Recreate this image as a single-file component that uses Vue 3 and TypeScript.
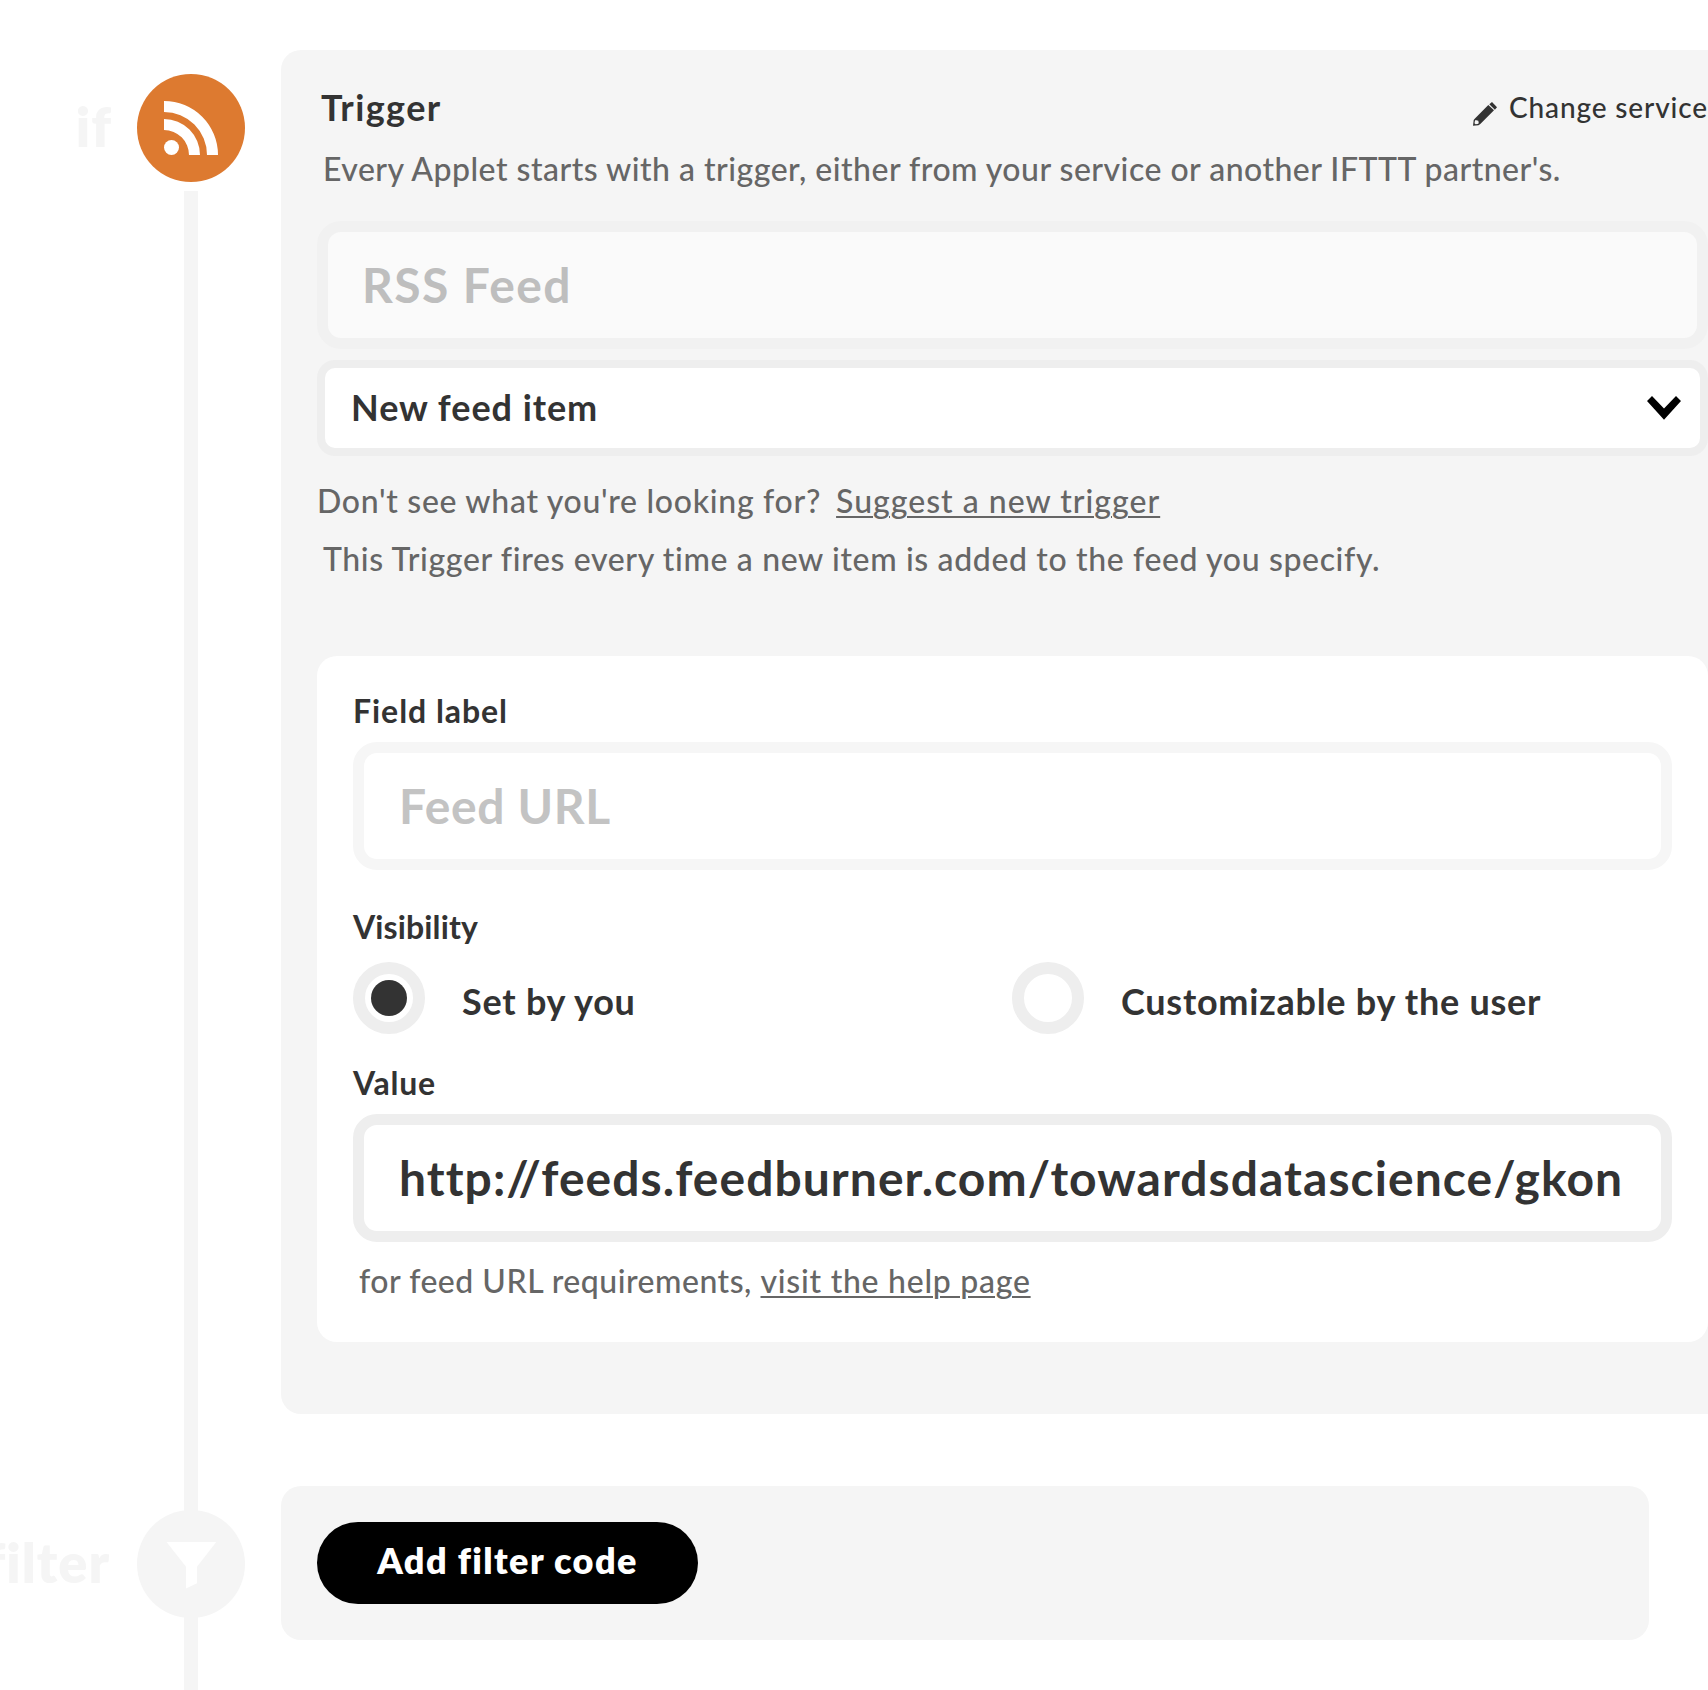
<script setup lang="ts">
import { ref } from 'vue'

type Visibility = 'fixed' | 'custom'

const visibility = ref<Visibility>('fixed')
const options: { id: Visibility; label: string }[] = [
  { id: 'fixed', label: 'Set by you' },
  { id: 'custom', label: 'Customizable by the user' },
]
</script>

<template>
  <main class="composer">
    <div class="connector"></div>

    <section class="step">
      <div class="rail">
        <span class="rail-label rail-if">if</span>
        <svg class="badge" viewBox="0 0 108 108">
          <circle cx="54" cy="54" r="54" fill="#dd7a30" />
          <g fill="#fff">
            <circle cx="34.5" cy="73.5" r="7.5" />
            <path d="M27 27a54 54 0 0 1 54 54H70A43 43 0 0 0 27 38Z" />
            <path d="M27 45a36 36 0 0 1 36 36H52A25 25 0 0 0 27 56Z" />
          </g>
        </svg>
      </div>

      <div class="panel trigger">
        <header class="head">
          <h2 class="title">Trigger</h2>
          <a class="change">
            <svg class="pencil" viewBox="0 0 24 24">
              <path fill="#333" d="M19 0 24 5.3 21.9 7.7 16.3 2.3Z" />
              <path
                fill="#333"
                fill-rule="evenodd"
                d="M15.3 3 21 8.3 7.3 22 5.5 23.3 0 23.8 0.7 18 1.7 16.7ZM2.5 18 1.9 19 1.5 21.3 2.5 22.3 4.6 22 5.8 21.2 5.3 18.8Z"
              />
            </svg>
            <span class="change-text">Change service</span>
          </a>
        </header>
        <p class="note intro">Every Applet starts with a trigger, either from your service or another IFTTT partner's.</p>

        <div class="field service"><span class="rss">RSS Feed</span></div>

        <div class="select">
          <span class="select-text">New feed item</span>
          <svg class="chevron" viewBox="0 0 34 24">
            <path d="M0 5 5 0 17 12.6 29 0 34 5 17 23.7Z" />
          </svg>
        </div>

        <p class="note suggest">
          <span class="ask">Don't see what you're looking for?</span>
          <a class="link suggest-link">Suggest a new trigger</a>
        </p>
        <p class="note fires">This Trigger fires every time a new item is added to the feed you specify.</p>

        <div class="card">
          <h3 class="label field-label">Field label</h3>
          <div class="field disabled"><span class="feed-url">Feed URL</span></div>

          <h3 class="label visibility">Visibility</h3>
          <div class="options">
            <div v-for="o in options" :key="o.id" class="option" @click="visibility = o.id">
              <span class="radio"><span v-if="visibility === o.id" class="dot"></span></span>
              <span class="option-text">{{ o.label }}</span>
            </div>
          </div>

          <h3 class="label value">Value</h3>
          <div class="field active"><span class="url">http://feeds.feedburner.com/towardsdatascience/gkon</span></div>

          <p class="note help">
            <span class="help-text">for feed URL requirements,&nbsp;</span><a class="link help-link">visit the help page</a>
          </p>
        </div>
      </div>
    </section>

    <section class="step">
      <div class="rail">
        <span class="rail-label">filter</span>
        <svg class="badge" viewBox="0 0 108 108">
          <circle cx="54" cy="54" r="54" fill="#f5f5f5" />
          <path fill="#fff" d="M29.5 32H79.3L60 56.7V73.3L49 78.4V56.7Z" />
        </svg>
      </div>
      <div class="panel filter">
        <button class="add" type="button">Add filter code</button>
      </div>
    </section>
  </main>
</template>

<style>
body {
  margin: 0;
  background: #fff;
}
</style>

<style scoped>
.composer {
  position: relative;
  box-sizing: border-box;
  width: 1708px;
  height: 1690px;
  padding-top: 50px;
  display: flex;
  flex-direction: column;
  gap: 72px;
  overflow: hidden;
  font-family: Lato, "Liberation Sans", sans-serif;
  color: #333;
  white-space: nowrap;
}
h2, h3, p {
  margin: 0;
}
.connector {
  position: absolute;
  left: 184px;
  top: 191px;
  bottom: 0;
  width: 14px;
  background: #f5f5f5;
}
.step {
  position: relative;
  display: flex;
  align-items: flex-start;
}
.rail {
  flex: none;
  width: 281px;
  padding-top: 24px;
  display: flex;
  justify-content: flex-end;
}
.rail-label {
  width: 110px;
  margin: -1px 27px 0 0;
  display: flex;
  justify-content: flex-end;
  font-size: 54px;
  font-weight: 800;
  line-height: 108px;
  letter-spacing: 1px;
  color: #f5f5f5;
}
.rail-if {
  width: 112px;
  margin-right: 25px;
}
.badge {
  flex: none;
  display: block;
  width: 108px;
  height: 108px;
  margin-right: 36px;
}
.panel {
  flex: none;
  box-sizing: border-box;
  border-radius: 20px;
  background: #f5f5f5;
}
.trigger {
  width: 1463px;
  padding: 35px 36px 72px;
}
.head {
  display: flex;
  justify-content: space-between;
  align-items: flex-start;
  height: 44px;
}
.title {
  margin-left: 4px;
  font-size: 36px;
  font-weight: 700;
  line-height: 44px;
  letter-spacing: 1.4px;
}
.change {
  display: flex;
  align-items: flex-start;
  gap: 12px;
}
.pencil {
  width: 24px;
  height: 24px;
  margin-top: 17px;
}
.change-text {
  margin-top: 4px;
  font-size: 28px;
  font-weight: 500;
  line-height: 36px;
  letter-spacing: 0.87px;
}
.note {
  font-size: 32px;
  font-weight: 500;
  line-height: 40px;
  color: #666;
}
.intro {
  margin: 20px 0 32px 6px;
  letter-spacing: 0.48px;
}
.field {
  box-sizing: border-box;
  height: 128px;
  padding: 0 35px 1px;
  border: 11px solid #eee;
  border-radius: 24px;
  background: #fff;
  display: flex;
  align-items: center;
  font-size: 48px;
  font-weight: 700;
  line-height: 58px;
}
.service {
  padding-left: 34px;
  border-color: #f1f1f1;
  background: #fafafa;
  color: #bebebe;
}
.rss {
  letter-spacing: 1.4px;
}
.select {
  box-sizing: border-box;
  height: 96px;
  margin-top: 11px;
  padding: 0 19px 0 26px;
  border: 8px solid #eee;
  border-radius: 18px;
  background: #fff;
  display: flex;
  align-items: center;
  justify-content: space-between;
}
.select-text {
  font-size: 36px;
  font-weight: 700;
  line-height: 44px;
  letter-spacing: 0.95px;
  margin-bottom: 2px;
}
.chevron {
  width: 34px;
  height: 24px;
}
.link {
  text-decoration: underline;
  text-decoration-thickness: 2px;
  text-underline-offset: 3px;
}
.suggest {
  display: flex;
  gap: 15px;
  margin: 25px 0 0;
}
.ask {
  letter-spacing: 0.7px;
}
.suggest-link {
  letter-spacing: 1.01px;
}
.fires {
  margin: 18px 0 77px 6px;
  letter-spacing: 0.63px;
}
.card {
  box-sizing: border-box;
  height: 686px;
  padding: 35px 36px 41px;
  border-radius: 20px;
  background: #fff;
}
.label {
  font-size: 32px;
  font-weight: 700;
  line-height: 40px;
}
.field-label {
  margin-bottom: 11px;
  letter-spacing: 0.95px;
}
.disabled {
  border-color: #f6f6f6;
  color: #c3c3c3;
}
.feed-url {
  letter-spacing: 0.65px;
}
.visibility {
  margin: 37px 0 15px;
  letter-spacing: 0.13px;
}
.options {
  display: grid;
  grid-template-columns: 659px 1fr;
}
.option {
  display: flex;
  align-items: center;
  gap: 37px;
}
.radio {
  box-sizing: border-box;
  width: 72px;
  height: 72px;
  border: 12px solid #eee;
  border-radius: 50%;
  display: flex;
  align-items: center;
  justify-content: center;
}
.dot {
  width: 36px;
  height: 36px;
  border-radius: 50%;
  background: #333;
}
.option-text {
  font-size: 36px;
  font-weight: 700;
  line-height: 44px;
  margin-top: 6px;
  letter-spacing: 0.75px;
}
.value {
  margin: 29px 0 11px;
  letter-spacing: 0.75px;
}
.url {
  letter-spacing: 1.05px;
}
.help {
  margin: 19px 0 0 6px;
}
.help-text {
  letter-spacing: 0.5px;
}
.help-link {
  letter-spacing: 0.73px;
}
.filter {
  width: 1368px;
  padding: 36px;
}
.add {
  display: block;
  width: 381px;
  height: 82px;
  padding: 0 0 6px;
  border: 0;
  border-radius: 41px;
  background: #000;
  color: #fff;
  font-family: inherit;
  font-size: 36px;
  font-weight: 800;
  line-height: 44px;
  letter-spacing: 1.4px;
}
</style>
